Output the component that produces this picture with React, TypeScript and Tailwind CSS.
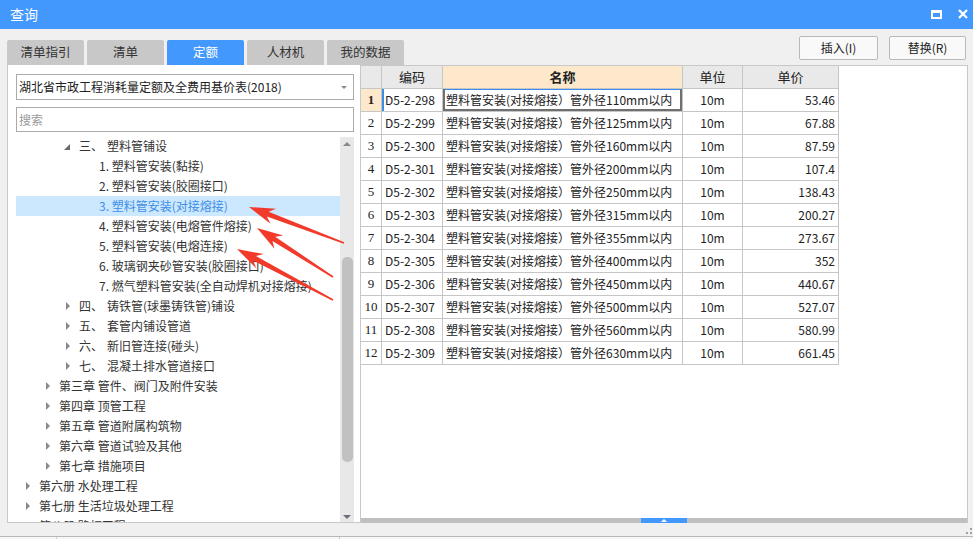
import React from 'react';

interface TreeRow {
  level: number;
  label: string;
  prefix?: string;
  expanded?: boolean;
  leaf?: boolean;
  selected?: boolean;
}

const tabs = ['清单指引', '清单', '定额', '人材机', '我的数据'];

const treeRows: TreeRow[] = [
  { level: 2, prefix: '三、', label: '塑料管铺设', expanded: true },
  { level: 3, label: '1. 塑料管安装(黏接)', leaf: true },
  { level: 3, label: '2. 塑料管安装(胶圈接口)', leaf: true },
  { level: 3, label: '3. 塑料管安装(对接熔接)', leaf: true, selected: true },
  { level: 3, label: '4. 塑料管安装(电熔管件熔接)', leaf: true },
  { level: 3, label: '5. 塑料管安装(电熔连接)', leaf: true },
  { level: 3, label: '6. 玻璃钢夹砂管安装(胶圈接口)', leaf: true },
  { level: 3, label: '7. 燃气塑料管安装(全自动焊机对接熔接)', leaf: true },
  { level: 2, prefix: '四、', label: '铸铁管(球墨铸铁管)铺设' },
  { level: 2, prefix: '五、', label: '套管内铺设管道' },
  { level: 2, prefix: '六、', label: '新旧管连接(碰头)' },
  { level: 2, prefix: '七、', label: '混凝土排水管道接口' },
  { level: 1, label: '第三章 管件、阀门及附件安装' },
  { level: 1, label: '第四章 顶管工程' },
  { level: 1, label: '第五章 管道附属构筑物' },
  { level: 1, label: '第六章 管道试验及其他' },
  { level: 1, label: '第七章 措施项目' },
  { level: 0, label: '第六册 水处理工程' },
  { level: 0, label: '第七册 生活垃圾处理工程' },
  { level: 0, label: '第八册 路灯工程' },
];

const sizes = ['110', '125', '160', '200', '250', '315', '355', '400', '450', '500', '560', '630'];
const prices = ['53.46', '67.88', '87.59', '107.4', '138.43', '200.27', '273.67', '352', '440.67', '527.07', '580.99', '661.45'];

const rows = sizes.map((s, i) => ({
  no: i + 1,
  code: `D5-2-${298 + i}`,
  name: `塑料管安装(对接熔接）管外径${s}mm以内`,
  unit: '10m',
  price: prices[i],
}));

// 红色箭头：从尾部到尖端逐渐变粗
function arrowPoints(tx: number, ty: number, px: number, py: number) {
  const dx = px - tx;
  const dy = py - ty;
  const len = Math.hypot(dx, dy);
  const ux = dx / len;
  const uy = dy / len;
  const nx = -uy;
  const ny = ux;
  const head = 26;
  const notch = 6;
  const hw = 8;
  const s0 = 0.8;
  const s1 = 2.6;
  const bx = px - ux * head;
  const by = py - uy * head;
  const jx = px - ux * (head - notch);
  const jy = py - uy * (head - notch);
  const pts = [
    [tx + nx * s0, ty + ny * s0],
    [jx + nx * s1, jy + ny * s1],
    [bx + nx * hw, by + ny * hw],
    [px, py],
    [bx - nx * hw, by - ny * hw],
    [jx - nx * s1, jy - ny * s1],
    [tx - nx * s0, ty - ny * s0],
  ];
  return pts.map(p => `${p[0].toFixed(1)},${p[1].toFixed(1)}`).join(' ');
}

function TreeItem({ row }: { row: TreeRow }) {
  const pl = 9 + row.level * 20;
  return (
    <div
      className={`h-[20px] flex items-center whitespace-nowrap ${row.selected ? 'bg-[#cce8ff] text-[#3f8ee6]' : 'text-[#333]'}`}
      style={{ paddingLeft: pl }}
    >
      <div className="w-[14px] h-[20px] flex items-center shrink-0">
        {!row.leaf && !row.expanded && (
          <div className="w-0 h-0 border-t-[4px] border-b-[4px] border-l-[4px] border-t-transparent border-b-transparent border-l-[#8a8a8a] ml-[1px]" />
        )}
        {row.expanded && (
          <div className="w-0 h-0 border-b-[6px] border-l-[6px] border-l-transparent border-b-[#6a6a6a] -ml-[1px] mt-[2px]" />
        )}
      </div>
      {row.prefix && <span className="w-[28px] shrink-0">{row.prefix}</span>}
      <span>{row.label}</span>
    </div>
  );
}

export default function App() {
  const cols = 'grid grid-cols-[21px_61px_240px_60px_96px]';
  return (
    <div className="w-[973px] h-[539px] bg-[#f0f0f0] overflow-hidden relative flex flex-col font-['Noto_Sans_CJK_SC','Noto_Sans',sans-serif] text-[12px]">
      {/* 标题栏 */}
      <div className="h-[29px] shrink-0 bg-[#4398fe] flex items-center justify-between pl-[10px] pr-[5px]">
        <span className="text-white text-[14px]">查询</span>
        <div className="flex items-center gap-[16px] mt-[-1px]">
          <div className="w-[11px] h-[9px] border-2 border-t-[3px] border-white" />
          <svg width="10" height="10" viewBox="0 0 10 10">
            <path d="M1 1L9 9M9 1L1 9" stroke="white" strokeWidth="2.3" />
          </svg>
        </div>
      </div>

      <div className="h-[494px] shrink-0 flex pl-[7px] pr-[5px]">
        {/* 左侧 */}
        <div className="w-[353px] shrink-0 flex flex-col">
          <div className="mt-[11px] h-[25px] flex gap-[3px] shrink-0">
            {tabs.map(t => (
              <div
                key={t}
                className={`w-[77px] shrink-0 rounded-t-[2px] flex items-center justify-center text-[12.5px] ${t === '定额' ? 'bg-[#4398fe] text-white' : 'bg-[#c8c8c8] text-[#333]'}`}
              >
                {t}
              </div>
            ))}
          </div>
          <div className="flex-1 bg-white border-l border-b border-[#c8c8c8] pl-[8px] flex flex-col min-h-0">
            <div className="mt-[9px] h-[26px] w-[338px] shrink-0 border border-[#ababab] flex items-center justify-between pl-[2px] pr-[6px] text-[#222]">
              <span>湖北省市政工程消耗量定额及全费用基价表(2018)</span>
              <div className="w-0 h-0 border-l-[3px] border-r-[3px] border-t-[3px] border-l-transparent border-r-transparent border-t-[#888]" />
            </div>
            <div className="mt-[7px] h-[25px] w-[338px] shrink-0 border border-[#ababab] flex items-center pl-[2px] text-[#9a9a9a]">
              搜索
            </div>
            <div className="mt-[4px] flex-1 flex min-h-0">
              <div className="w-[324px] shrink-0 overflow-hidden">
                {treeRows.map((r, i) => (
                  <TreeItem key={i} row={r} />
                ))}
              </div>
              <div className="w-[14px] mt-[1px] bg-[#e8e8e8] flex flex-col items-center pt-[4px] pb-[3px]">
                <div className="w-0 h-0 border-l-[4px] border-r-[4px] border-b-[4px] border-l-transparent border-r-transparent border-b-[#8a8a8a] mt-[1px]" />
                <div className="h-[111px] shrink-0" />
                <div className="w-[11px] h-[205px] rounded-[5px] bg-[#c1c1c1] shrink-0" />
                <div className="flex-1" />
                <div className="w-0 h-0 border-l-[4px] border-r-[4px] border-t-[4px] border-l-transparent border-r-transparent border-t-[#6e6e7a]" />
              </div>
            </div>
          </div>
        </div>

        {/* 右侧 */}
        <div className="flex-1 flex flex-col min-w-0">
          <div className="mt-[7px] h-[24px] shrink-0 flex justify-end gap-[11px] pr-[2px]">
            <div className="w-[79px] border border-[#b9b9b9] rounded-[2px] bg-[#f9f9f9] flex items-center justify-center text-[#222]">插入(I)</div>
            <div className="w-[77px] border border-[#b9b9b9] rounded-[2px] bg-[#f9f9f9] flex items-center justify-center text-[#222]">替换(R)</div>
          </div>
          <div className="mt-[5px] flex-1 bg-white border-l border-t border-r border-[#c8c8c8] flex flex-col min-h-0">
            <div className="flex-1 min-h-0">
              <div className={`${cols} h-[23px] text-[13px] text-[#222]`}>
                <div className="bg-[#e9e9e9] border-r border-b border-[#c6c6c6]" />
                <div className="bg-[#e9e9e9] border-r border-b border-[#c6c6c6] flex items-center justify-center">编码</div>
                <div className="bg-[#fde8cc] border-r border-b border-[#c6c6c6] flex items-center justify-center font-bold">名称</div>
                <div className="bg-[#e9e9e9] border-r border-b border-[#c6c6c6] flex items-center justify-center">单位</div>
                <div className="bg-[#e9e9e9] border-r border-b border-[#c6c6c6] flex items-center justify-center">单价</div>
              </div>
              {rows.map(r => {
                const first = r.no === 1;
                return (
                  <div key={r.no} className={`${cols} h-[23px] text-[#222]`}>
                    <div
                      className={`border-r border-b border-[#c6c6c6] flex items-center justify-center font-['Liberation_Serif',serif] text-[13px] ${first ? 'bg-[#fde8cc] font-bold' : ''}`}
                    >
                      {r.no}
                    </div>
                    <div
                      className={`border-r border-b border-[#c6c6c6] flex items-center pl-[3px] ${first ? 'shadow-[inset_2px_0_0_#3b8ee8]' : ''}`}
                    >
                      {r.code}
                    </div>
                    <div
                      className={`border-r border-b border-[#c6c6c6] flex items-center pl-[3px] whitespace-nowrap overflow-hidden ${first ? 'shadow-[inset_2px_0_0_#707070,inset_-2px_0_0_#707070,inset_0_-2px_0_#707070,inset_0_1px_0_#3b8ee8]' : ''}`}
                    >
                      {r.name}
                    </div>
                    <div className="border-r border-b border-[#c6c6c6] flex items-center justify-center">{r.unit}</div>
                    <div className="border-r border-b border-[#c6c6c6] flex items-center justify-end pr-[3px]">{r.price}</div>
                  </div>
                );
              })}
            </div>
            <div className="h-[5px] shrink-0 bg-[#c0c0c0] flex justify-center">
              <div className="w-[46px] bg-[#4398fe] flex items-center justify-center">
                <div className="w-0 h-0 border-l-[3px] border-r-[3px] border-b-[3px] border-l-transparent border-r-transparent border-b-white" />
              </div>
            </div>
          </div>
        </div>
      </div>

      {/* 底部 */}
      <div className="h-[13px] shrink-0 flex justify-end items-end pr-[1px] pb-[2px]">
        <svg width="6" height="6" viewBox="0 0 6 6">
          <rect x="4" y="0" width="2" height="2" fill="#a0a0a0" />
          <rect x="0" y="4" width="2" height="2" fill="#a0a0a0" />
          <rect x="4" y="4" width="2" height="2" fill="#a0a0a0" />
        </svg>
      </div>
      <div className="flex-1 border-t border-[#b8b8b8] bg-[#f7f7f7] flex">
        <div className="w-[57px] border-r border-[#d0d0d0]" />
        <div className="w-[283px] border-r border-[#c8c8c8]" />
      </div>

      {/* 标注箭头 */}
      <svg className="absolute left-0 top-0 pointer-events-none" width="973" height="539">
        <polygon points={arrowPoints(344, 243, 249, 207)} fill="#f23a2b" />
        <polygon points={arrowPoints(333, 277, 257, 228)} fill="#f23a2b" />
        <polygon points={arrowPoints(333, 300, 237, 249)} fill="#f23a2b" />
      </svg>
    </div>
  );
}
